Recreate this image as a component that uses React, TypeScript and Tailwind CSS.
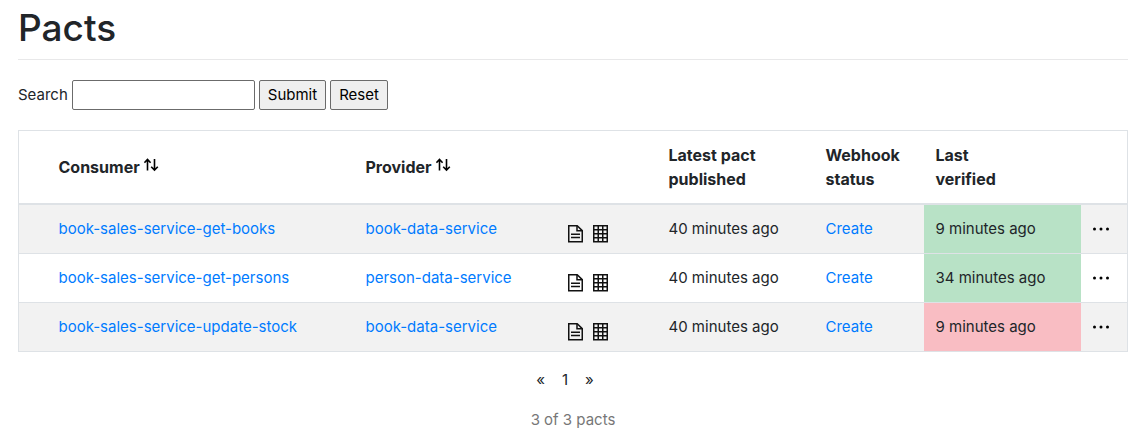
type Pact = {
  consumer: string;
  provider: string;
  published: string;
  verified: string;
  success: boolean;
};

const pacts: Pact[] = [
  {
    consumer: "book-sales-service-get-books",
    provider: "book-data-service",
    published: "40 minutes ago",
    verified: "9 minutes ago",
    success: true,
  },
  {
    consumer: "book-sales-service-get-persons",
    provider: "person-data-service",
    published: "40 minutes ago",
    verified: "34 minutes ago",
    success: true,
  },
  {
    consumer: "book-sales-service-update-stock",
    provider: "book-data-service",
    published: "40 minutes ago",
    verified: "9 minutes ago",
    success: false,
  },
];

function SortIcon() {
  return (
    <svg width="16" height="16" viewBox="0 0 16 16" fill="none" stroke="#000" strokeWidth="1.6" aria-hidden="true">
      <path d="M3.5 13.5V2.5M0.4 5.7L3.5 2.4L6.6 5.7M10.5 2V13M7.2 9.8L10.5 13.1L13.8 9.8" />
    </svg>
  );
}

function DocumentIcon() {
  return (
    <svg width="16" height="18" viewBox="0 0 16 18" fill="none" stroke="#111" strokeWidth="1.5" aria-hidden="true">
      <path d="M0.75 0.75H9.2L14.25 5.6V16.75H0.75Z" />
      <path d="M9 1V5.75H14" />
      <path d="M3 9.25H12M3 12.5H12" />
    </svg>
  );
}

function GridIcon() {
  return (
    <svg width="16" height="18" viewBox="0 0 16 18" fill="none" stroke="#111" strokeWidth="1.5" aria-hidden="true">
      <path d="M1.75 0.75H15.25V16.75H1.75Z" />
      <path d="M6.25 1V17M10.75 1V17M2 4.75H15M2 8.75H15M2 12.75H15" />
    </svg>
  );
}

function MoreIcon() {
  return (
    <svg width="18" height="4" viewBox="0 0 18 4" fill="#000" aria-hidden="true">
      <circle cx="2.5" cy="2" r="1.5" />
      <circle cx="9" cy="2" r="1.5" />
      <circle cx="15.5" cy="2" r="1.5" />
    </svg>
  );
}

function SortableHeading({ label }: { label: string }) {
  return (
    <th scope="col" className="px-3 py-3">
      <div className="flex items-center gap-1">
        {label}
        <button type="button" aria-label={"Sort by " + label} className="pb-1">
          <SortIcon />
        </button>
      </div>
    </th>
  );
}

function PactRow({ pact }: { pact: Pact }) {
  return (
    <tr className="border-t border-[#dee2e6] odd:bg-[#f2f2f2]">
      <td />
      <td className="p-3">
        <a href="#consumer" className="text-[#007bff]">{pact.consumer}</a>
      </td>
      <td className="p-3">
        <a href="#provider" className="text-[#007bff]">{pact.provider}</a>
      </td>
      <td className="px-3">
        <div className="flex gap-2 pt-[10px]">
          <a href="#pact" aria-label="View pact"><DocumentIcon /></a>
          <a href="#matrix" aria-label="View pact matrix"><GridIcon /></a>
        </div>
      </td>
      <td className="p-3">{pact.published}</td>
      <td className="p-3">
        <a href="#webhooks" className="text-[#007bff]">Create</a>
      </td>
      <td className={pact.success ? "bg-[#b8e2c6] p-3" : "bg-[#f9bdc3] p-3"}>{pact.verified}</td>
      <td>
        <button type="button" aria-label="More actions" className="flex px-[11px] py-2">
          <MoreIcon />
        </button>
      </td>
    </tr>
  );
}

export default function App() {
  return (
    <main className="bg-white pr-5 pl-[18px] pt-1 font-['Inter',sans-serif] text-[15px] leading-6 text-[#212529]">
      <h1 className="border-b border-[#e8e8e9] pb-2 text-[37px] leading-[47px] font-medium">Pacts</h1>
      <form className="mt-5 flex items-center gap-1" onSubmit={(event) => event.preventDefault()}>
        <label htmlFor="search">Search</label>
        <input id="search" type="text" className="h-[30px] w-[183px] rounded-xs border border-[#6b6b6b] px-1" />
        <button type="submit" className="h-[30px] rounded-xs border border-[#6b6b6b] bg-[#efefef] px-2 text-black">
          Submit
        </button>
        <button type="reset" className="h-[30px] rounded-xs border border-[#6b6b6b] bg-[#efefef] px-2 text-black">
          Reset
        </button>
      </form>
      <table className="mt-5 w-full table-fixed border-collapse border border-[#dee2e6] text-left">
        <colgroup>
          <col className="w-7" />
          <col className="w-[307px]" />
          <col />
          <col className="w-[101px]" />
          <col className="w-[157px]" />
          <col className="w-[110px]" />
          <col className="w-[157px]" />
          <col className="w-[47px]" />
        </colgroup>
        <thead className="border-b-2 border-[#dee2e6] text-[16px] font-semibold">
          <tr>
            <th />
            <SortableHeading label="Consumer" />
            <SortableHeading label="Provider" />
            <th />
            <th scope="col" className="p-3">Latest pact<br />published</th>
            <th scope="col" className="p-3">Webhook<br />status</th>
            <th scope="col" className="p-3">Last<br />verified</th>
            <th />
          </tr>
        </thead>
        <tbody>
          {pacts.map((pact) => (
            <PactRow key={pact.consumer} pact={pact} />
          ))}
        </tbody>
      </table>
      <nav aria-label="Pages" className="mt-4 flex justify-center gap-[17px] pr-4">
        <a href="#previous">«</a>
        <a href="#page-1">1</a>
        <a href="#next">»</a>
      </nav>
      <p className="mt-4 pb-2 text-center text-[#777]">3 of 3 pacts</p>
    </main>
  );
}
